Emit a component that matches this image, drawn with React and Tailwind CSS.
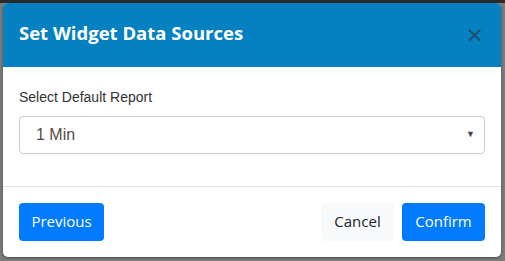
import React from "react";

const App = () => {
  return (
    <div className="w-[505px] h-[261px] bg-[#7b7b7b] border-t-[3px] border-[#2a2a2a] px-[3px] overflow-hidden">
      <div className="w-[498px] h-[254px] bg-white rounded-[5px] overflow-hidden flex flex-col shadow-[0_1px_3px_rgba(0,0,0,0.4)]">
        <div className="h-[64px] shrink-0 bg-[#0580c0] flex items-center justify-between pl-[16px] pr-[17px]">
          <h4 className="text-white font-bold text-[18.5px] font-['Open_Sans',sans-serif] leading-none pb-[3px]">
            Set Widget Data Sources
          </h4>
          <button type="button" className="text-[#1d4f6b] text-[22px] leading-none font-['DejaVu_Sans',sans-serif]">
            ×
          </button>
        </div>
        <div className="px-[16px] pt-[23px] h-[120px] border-b border-[#e2e2e6] font-['Liberation_Sans',sans-serif]">
          <label className="block text-[14px] text-[#333] leading-none">Select Default Report</label>
          <div className="mt-[12px] h-[38px] border border-[#ccc] rounded-[4px] flex items-center justify-between pl-[16px] pr-[9px]">
            <span className="text-[16px] text-[#5b4a42]">1 Min</span>
            <span className="text-[9px] text-[#444]">▼</span>
          </div>
        </div>
        <div className="flex-1 flex items-center justify-between px-[16px] pb-[1px] font-['Open_Sans',sans-serif] text-[15px]">
          <button type="button" className="h-[38px] w-[85px] bg-[#007bff] text-white rounded-[4px]">
            Previous
          </button>
          <div className="flex gap-[8px]">
            <button type="button" className="h-[38px] w-[73px] bg-[#f8f9fa] text-[#212529] rounded-[4px]">
              Cancel
            </button>
            <button type="button" className="h-[38px] w-[83px] bg-[#007bff] text-white rounded-[4px]">
              Confirm
            </button>
          </div>
        </div>
      </div>
    </div>
  );
};

export default App;
